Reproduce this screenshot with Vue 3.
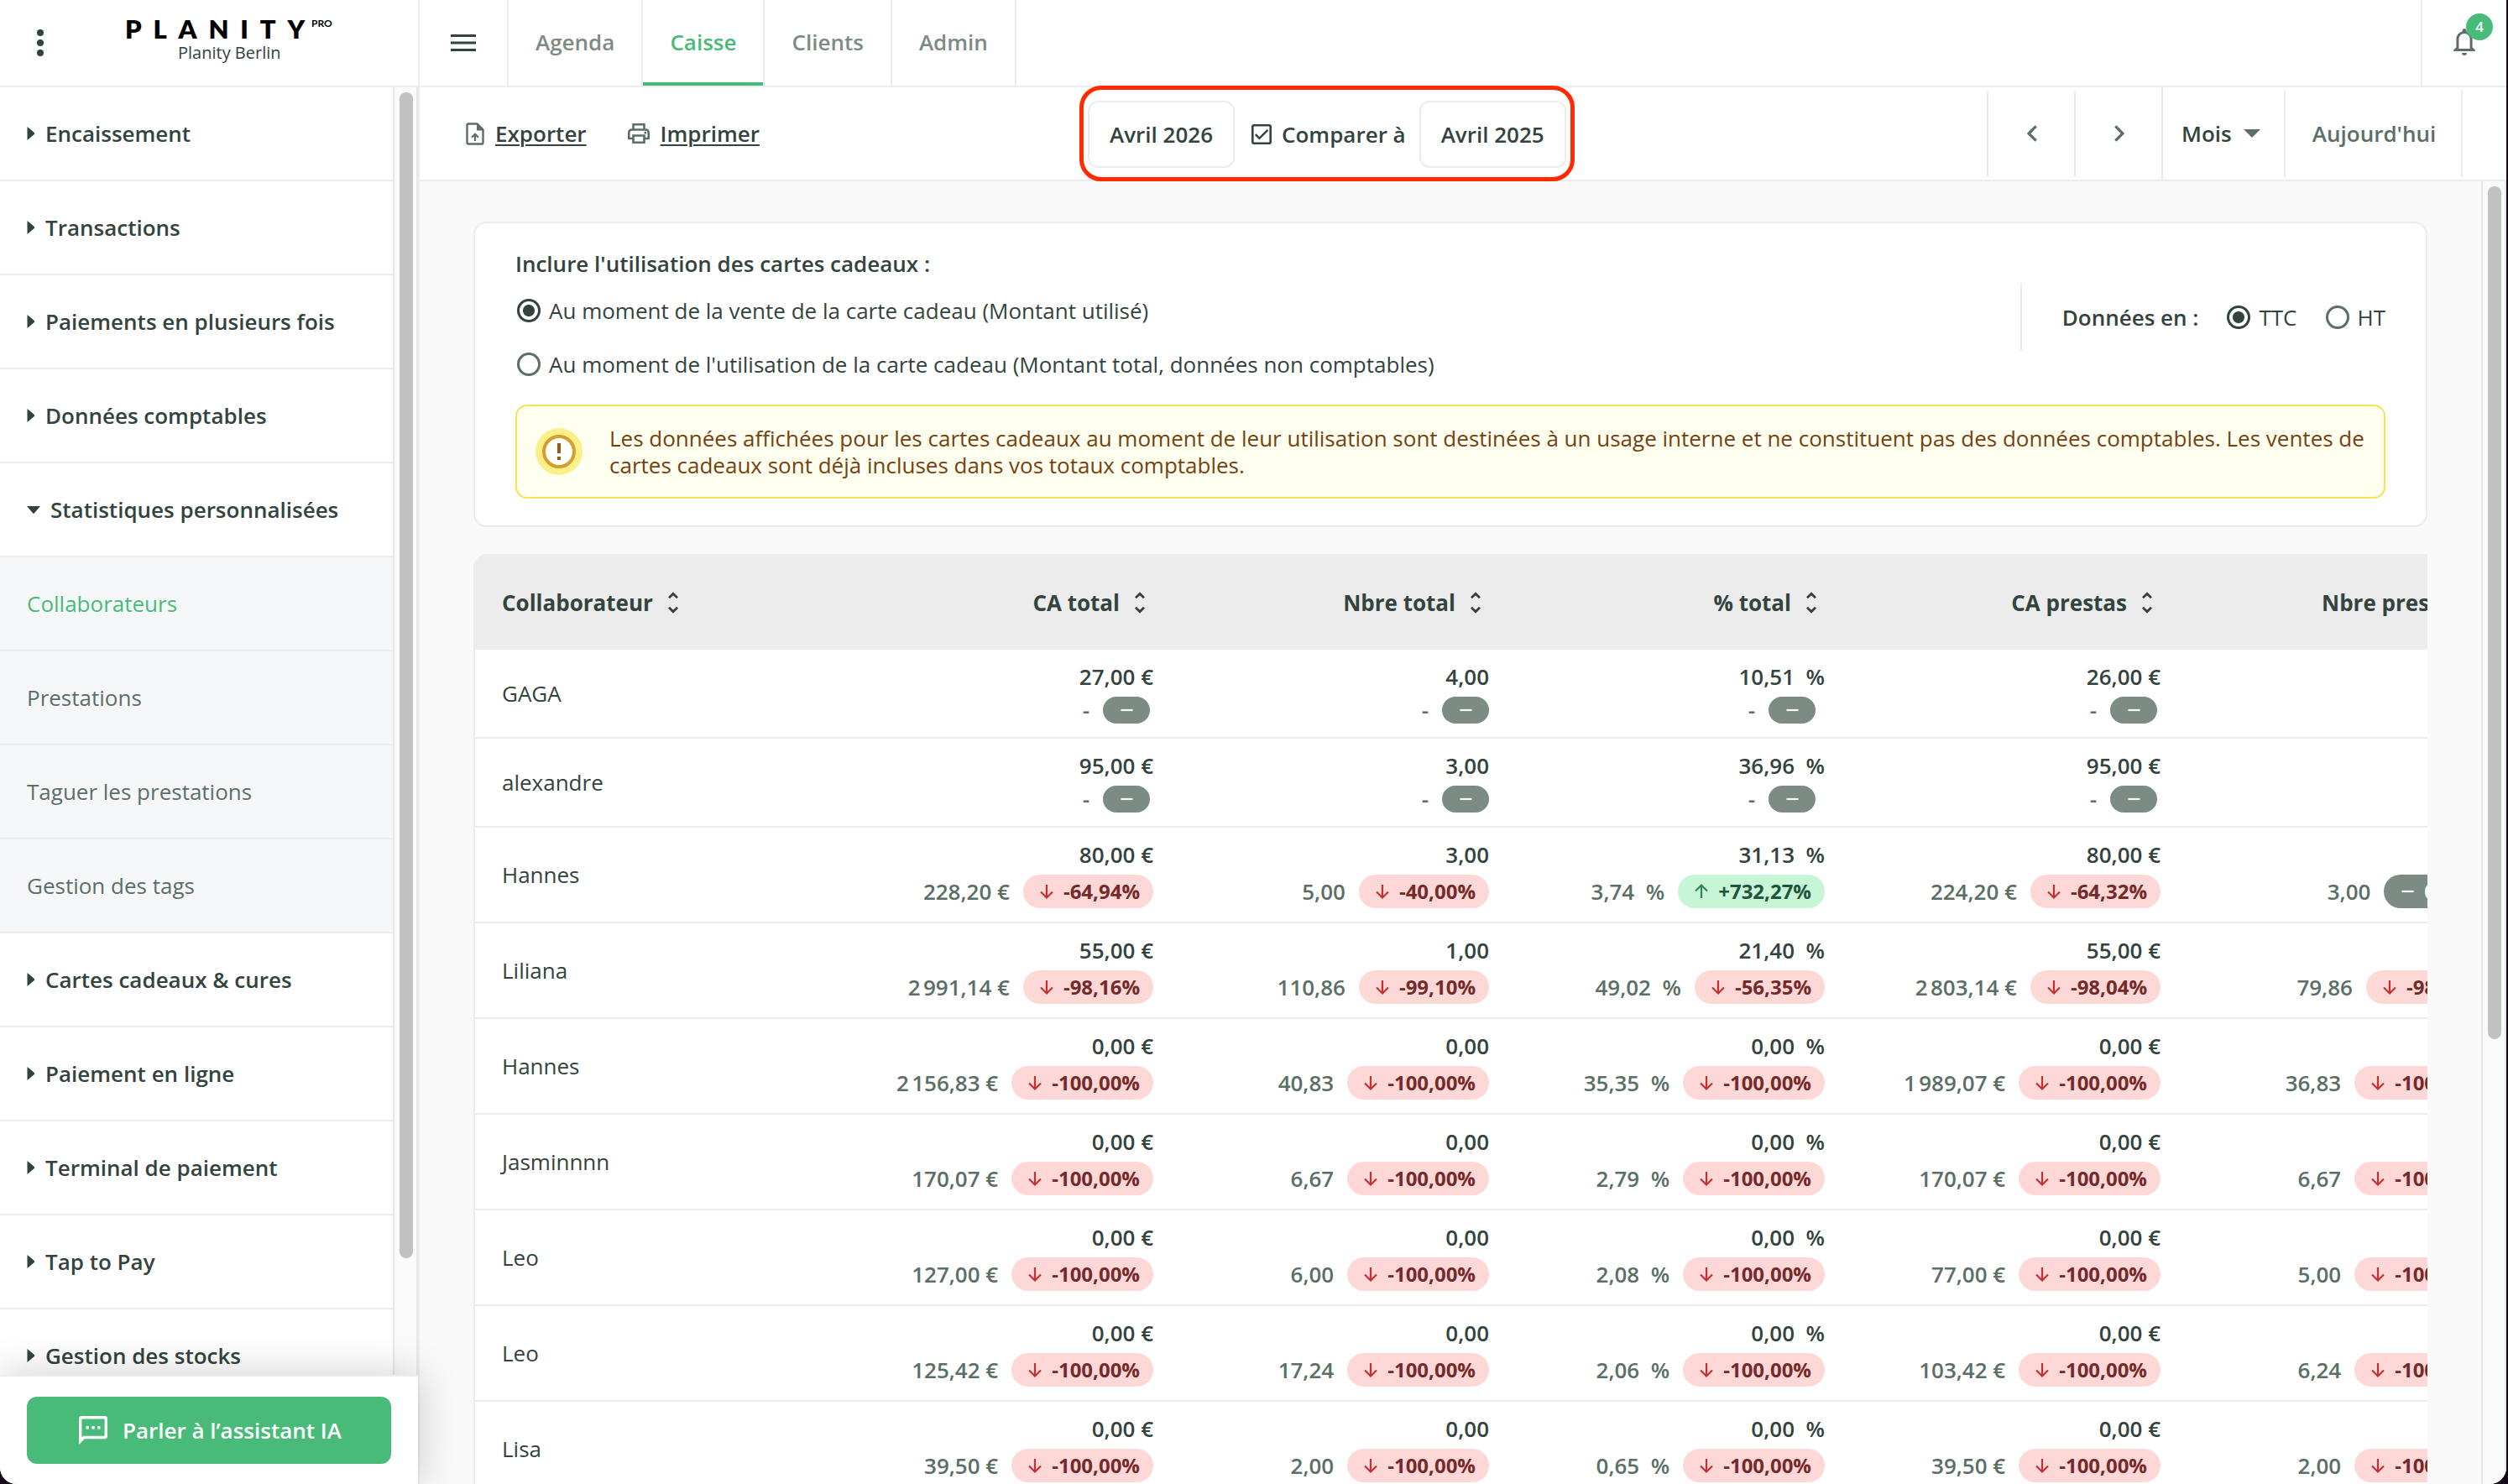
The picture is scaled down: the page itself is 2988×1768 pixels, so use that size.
<template>
  <div class="screen">
    <header class="topbar">
      <div class="brand">
        <svg class="kebab" viewBox="0 0 8 32">
          <circle cx="4" cy="4" r="4" />
          <circle cx="4" cy="16" r="4" />
          <circle cx="4" cy="28" r="4" />
        </svg>
        <div class="brand-text">
          <div class="logo">PLANITY<sup>PRO</sup></div>
          <div class="salon">Planity Berlin</div>
        </div>
      </div>
      <button class="burger">
        <svg viewBox="0 0 30 20">
          <path d="M0 0h30v3H0zM0 8.5h30v3H0zM0 17h30v3H0z" />
        </svg>
      </button>
      <nav class="tabs">
        <a v-for="tab in tabs" :key="tab" class="tab" :class="{ active: tab === 'Caisse' }">{{ tab }}</a>
      </nav>
      <div class="bell">
        <svg viewBox="0 0 26 32">
          <path d="M13 0c1.4 0 2.4 1 2.4 2.4v1C19.6 4.400 22.600 8 22.600 12.400V22.500L26 25.600V27H0v-1.400L3.400 22.500V12.400C3.400 8 6.400 4.400 10.600 3.400v-1C10.600 1 11.600 0 13 0zM13 6c-3.800 0-6.600 2.900-6.600 6.700V24h13.200V12.700C19.600 8.900 16.800 6 13 6zM10 29h6a3 3 0 0 1-6 0z" fill-rule="evenodd" />
        </svg>
        <span class="badge">4</span>
      </div>
    </header>

    <div class="body">
      <aside class="sidebar">
        <div class="menu-wrap">
          <ul class="menu">
            <li v-for="item in menu" :key="item.label" :class="{ sub: item.sub, current: item.current }">
              <svg v-if="item.open" class="arrow-down" viewBox="0 0 16 9"><path d="M0 0h16l-7 8.300q-1 1-2 0z" /></svg>
              <svg v-else-if="!item.sub" class="arrow-right" viewBox="0 0 9 16"><path d="M0 0v16l8.300-7q1-1 0-2z" /></svg>
              <span>{{ item.label }}</span>
            </li>
          </ul>
          <div class="track"><div class="thumb side-thumb"></div></div>
        </div>
        <div class="assistant">
          <button>
            <svg viewBox="0 0 34 34">
              <path d="M3.400 0h27.200Q34 0 34 3.400V23.800Q34 27.200 30.600 27.200H6.800L0 34V3.400Q0 0 3.400 0zM3.400 3.400V25.600L5.200 23.800H30.600V3.400zM8.500 12h3.400v3.400H8.500zM15.300 12h3.400v3.400h-3.400zM22.100 12h3.400v3.400h-3.400z" fill-rule="evenodd" />
            </svg>
            Parler à l’assistant IA
          </button>
        </div>
      </aside>

      <main class="main">
        <div class="toolbar">
          <div class="actions">
            <a class="action">
              <svg class="export" viewBox="0 0 22 27">
                <path d="M3 1.500h10.500l7 7V24q0 1.500-1.500 1.500H3Q1.500 25.500 1.500 24V3Q1.500 1.500 3 1.500z" fill="none" stroke="currentColor" stroke-width="2.400" />
                <path d="M13 1l8.500 8.500H13z" />
                <path d="M11 22v-7.500M7 17.800l4-4 4 4" fill="none" stroke="currentColor" stroke-width="2.200" />
              </svg>
              <span>Exporter</span>
            </a>
            <a class="action">
              <svg class="print" viewBox="0 0 26 24" fill="none" stroke="currentColor" stroke-width="2.600">
                <path d="M6.500 7V1.300h13V7M6.500 18H1.300V11q0-3.500 3.500-3.500h16.400q3.500 0 3.500 3.500v7h-5.200M6.500 14.500h13v8.200h-13z" />
                <path d="M19.500 11.200h2.600" />
              </svg>
              <span>Imprimer</span>
            </a>
          </div>
          <div class="period">
            <div class="date">Avril 2026</div>
            <label class="compare">
              <svg viewBox="0 0 24 24" fill="none" stroke="currentColor">
                <rect x="1.300" y="1.300" width="21.400" height="21.400" rx="1.800" stroke-width="2.600" />
                <path d="M4.800 12.200l4.600 4.600 10-10" stroke-width="2.500" />
              </svg>
              Comparer à
            </label>
            <div class="date">Avril 2025</div>
          </div>
          <div class="pager">
            <div class="step"><svg viewBox="0 0 12 20"><path d="M10.700 1.300L2 10l8.700 8.700" /></svg></div>
            <div class="step"><svg viewBox="0 0 12 20"><path d="M1.300 1.300L10 10l-8.700 8.700" /></svg></div>
            <div class="range">Mois <svg viewBox="0 0 20 10"><path d="M0 0h20L10 10z" /></svg></div>
            <div class="today">Aujourd'hui</div>
          </div>
        </div>

        <div class="scroll">
          <div class="content">
            <section class="card">
              <div class="card-top">
                <div class="gift">
                  <h2>Inclure l'utilisation des cartes cadeaux :</h2>
                  <label class="radio on"><i></i>Au moment de la vente de la carte cadeau (Montant utilisé)</label>
                  <label class="radio"><i></i>Au moment de l'utilisation de la carte cadeau (Montant total, données non comptables)</label>
                </div>
                <div class="tax">
                  <b>Données en :</b>
                  <label class="radio on"><i></i>TTC</label>
                  <label class="radio"><i></i>HT</label>
                </div>
              </div>
              <div class="alert">
                <svg viewBox="0 0 56 56">
                  <circle cx="28" cy="28" r="28" fill="#faf089" />
                  <circle cx="28" cy="28" r="18" fill="#fff" stroke="#d69e2e" stroke-width="4" />
                  <path d="M26 18h4v12h-4zM26 34h4v4h-4z" fill="#975a16" />
                </svg>
                <p>Les données affichées pour les cartes cadeaux au moment de leur utilisation sont destinées à un usage interne et ne constituent pas des données comptables. Les ventes de cartes cadeaux sont déjà incluses dans vos totaux comptables.</p>
              </div>
            </section>

            <section class="table">
              <div class="row head">
                <div v-for="(col, i) in columns" :key="col" class="cell" :class="{ name: i === 0 }">
                  {{ col }}
                  <svg class="sort" viewBox="0 0 32 32"><path d="M11 10.200l5-5 5 5M11 21.800l5 5 5-5" /></svg>
                </div>
              </div>
              <div v-for="(row, r) in rows" :key="r" class="row">
                <div class="cell name">{{ row.name }}</div>
                <div v-for="(c, i) in row.cells" :key="i" class="cell" :class="units[i]">
                  <div class="now">{{ withUnit(c[0], i) }}</div>
                  <div class="before">
                    <span>{{ c[1] ? withUnit(c[1], i) : '-' }}</span>
                    <div class="pill" :class="[tone(c[2]), { empty: !c[2] }]">
                      <svg viewBox="0 0 24 24"><path :d="glyphs[tone(c[2])]" /></svg>
                      <template v-if="c[2]">{{ c[2] }}</template>
                    </div>
                  </div>
                </div>
              </div>
            </section>
          </div>
          <div class="track"><div class="thumb main-thumb"></div></div>
        </div>
      </main>
    </div>
  </div>
</template>

<script setup>
const tabs = ['Agenda', 'Caisse', 'Clients', 'Admin']

const menu = [
  { label: 'Encaissement' },
  { label: 'Transactions' },
  { label: 'Paiements en plusieurs fois' },
  { label: 'Données comptables' },
  { label: 'Statistiques personnalisées', open: true },
  { label: 'Collaborateurs', sub: true, current: true },
  { label: 'Prestations', sub: true },
  { label: 'Taguer les prestations', sub: true },
  { label: 'Gestion des tags', sub: true },
  { label: 'Cartes cadeaux & cures' },
  { label: 'Paiement en ligne' },
  { label: 'Terminal de paiement' },
  { label: 'Tap to Pay' },
  { label: 'Gestion des stocks' }
]

const columns = ['Collaborateur', 'CA total', 'Nbre total', '% total', 'CA prestas', 'Nbre prestas']
const units = ['eur', 'nb', 'pct', 'eur', 'nb']

// [valeur, valeur comparée, évolution]
const rows = [
  { name: 'GAGA', cells: [['27,00'], ['4,00'], ['10,51'], ['26,00']] },
  { name: 'alexandre', cells: [['95,00'], ['3,00'], ['36,96'], ['95,00']] },
  { name: 'Hannes', cells: [['80,00', '228,20', '-64,94%'], ['3,00', '5,00', '-40,00%'], ['31,13', '3,74', '+732,27%'], ['80,00', '224,20', '-64,32%'], ['', '3,00', '0,00%']] },
  { name: 'Liliana', cells: [['55,00', '2\u202f991,14', '-98,16%'], ['1,00', '110,86', '-99,10%'], ['21,40', '49,02', '-56,35%'], ['55,00', '2\u202f803,14', '-98,04%'], ['', '79,86', '-98,75%']] },
  lost('Hannes', '2\u202f156,83', '40,83', '35,35', '1\u202f989,07', '36,83'),
  lost('Jasminnnn', '170,07', '6,67', '2,79', '170,07', '6,67'),
  lost('Leo', '127,00', '6,00', '2,08', '77,00', '5,00'),
  lost('Leo', '125,42', '17,24', '2,06', '103,42', '6,24'),
  lost('Lisa', '39,50', '2,00', '0,65', '39,50', '2,00')
]

const glyphs = {
  down: 'M12 4v15M5 12.500l7 7 7-7',
  up: 'M12 20V5M5 11.500l7-7 7 7',
  flat: 'M5.500 12h14'
}

function lost (name, ...values) {
  return { name, cells: values.map((v, i) => [i < 4 ? '0,00' : '', v, '-100,00%']) }
}

function withUnit (value, i) {
  if (units[i] === 'eur') return value + '\u00a0€'
  if (units[i] === 'pct') return value + '\u00a0\u00a0%'
  return value
}

function tone (change) {
  if (!change || change === '0,00%') return 'flat'
  return change[0] === '-' ? 'down' : 'up'
}
</script>

<style>
body {
  background: #150a1c;
}
</style>

<style scoped>
* {
  box-sizing: border-box;
}

.screen {
  width: 2986px;
  height: 1768px;
  overflow: hidden;
  background: #fff;
  border-radius: 0 0 20px 20px;
  font-family: "Open Sans", "Noto Sans", sans-serif;
  font-size: 26px;
  line-height: 32px;
  color: #33433d;
  display: flex;
  flex-direction: column;
}

svg {
  display: block;
  flex: none;
  fill: currentColor;
}

button {
  border: 0;
  padding: 0;
  background: none;
  font: inherit;
  color: inherit;
}

.topbar {
  height: 104px;
  flex: none;
  display: flex;
  border-bottom: 2px solid #ececec;
}

.brand {
  width: 500px;
  display: flex;
  padding-left: 44px;
  border-right: 2px solid #ececec;
}

.kebab {
  width: 8px;
  height: 32px;
  margin-top: 35px;
}

.brand-text {
  padding-left: 97px;
  padding-top: 18px;
}

.logo {
  font-family: Lato, sans-serif;
  font-weight: 800;
  font-size: 31px;
  line-height: 32px;
  letter-spacing: 13.800px;
  color: #000;
  white-space: nowrap;
}

.logo sup {
  display: inline-block;
  vertical-align: 14px;
  font-size: 12px;
  font-weight: 700;
  line-height: 12px;
  letter-spacing: 0;
  margin-left: -6px;
}

.salon {
  font-size: 20px;
  line-height: 26px;
  padding-left: 63px;
}

.burger {
  width: 106px;
  border-right: 2px solid #ececec;
  display: flex;
  align-items: center;
  justify-content: center;
}

.burger svg {
  width: 30px;
  height: 20px;
}

.tabs {
  display: flex;
  flex: 1;
}

.tab {
  padding: 0 32px;
  line-height: 101px;
  font-weight: 600;
  color: #7d8b85;
  border-right: 2px solid #ececec;
}

.tab.active {
  color: #48bb78;
  box-shadow: inset 0 -4px #48bb78;
}

.bell {
  position: relative;
  width: 102px;
  border-left: 2px solid #ececec;
  padding: 34px 0 0 37px;
  color: #5b6f67;
}

.bell svg {
  width: 26px;
  height: 32px;
}

.badge {
  position: absolute;
  top: 16px;
  left: 52px;
  width: 32px;
  height: 32px;
  border-radius: 50%;
  background: #48bb78;
  color: #fff;
  font-size: 17px;
  font-weight: 600;
  text-align: center;
}

.body {
  flex: 1;
  min-height: 0;
  display: flex;
}

.sidebar {
  width: 500px;
  flex: none;
  display: flex;
  flex-direction: column;
  border-right: 2px solid #ececec;
  z-index: 1;
}

.menu-wrap {
  flex: 1;
  min-height: 0;
  overflow: hidden;
  display: flex;
}

.menu {
  flex: 1;
  margin: 0;
  padding: 0;
  list-style: none;
}

.menu li {
  height: 112px;
  display: flex;
  align-items: center;
  gap: 12px;
  padding-left: 32px;
  border-bottom: 2px solid #ececec;
  font-weight: 600;
}

.menu li.sub {
  background: #f6f7f9;
  font-weight: 400;
  color: #5b6f67;
}

.menu li.current {
  color: #48bb78;
}

.arrow-right {
  width: 10px;
  height: 16px;
}

.arrow-down {
  width: 16px;
  height: 9px;
}

.track {
  width: 30px;
  flex: none;
  background: #fafafa;
  border: solid #e8e8e8;
  border-width: 0 2px;
  padding: 6px;
}

.thumb {
  width: 16px;
  border-radius: 8px;
  background: #c1c1c1;
}

.side-thumb {
  height: 1389px;
}

.main-thumb {
  height: 1016px;
}

.assistant {
  height: 130px;
  flex: none;
  padding: 24px 32px;
  background: #fff;
  border-top: 2px solid #ececec;
  box-shadow: 0 0 50px rgba(0, 0, 0, 0.2);
}

.assistant button {
  width: 434px;
  height: 80px;
  padding-left: 3px;
  border-radius: 12px;
  background: #48bb78;
  color: #fff;
  font-weight: 600;
  display: flex;
  align-items: center;
  justify-content: center;
  gap: 18px;
}

.assistant svg {
  width: 34px;
  height: 34px;
}

.main {
  flex: 1;
  min-width: 0;
  display: flex;
  flex-direction: column;
}

.toolbar {
  height: 112px;
  flex: none;
  display: flex;
  align-items: center;
  border-bottom: 2px solid #ececec;
}

.actions {
  width: 786px;
  padding-left: 55px;
  display: flex;
  gap: 49px;
}

.action {
  display: flex;
  align-items: center;
  gap: 13px;
  font-weight: 600;
}

.action span {
  text-decoration: underline;
  text-decoration-thickness: 2px;
  text-underline-offset: 3px;
}

.action svg {
  color: #5b6f67;
}

.export {
  width: 22px;
  height: 27px;
}

.print {
  width: 26px;
  height: 24px;
}

.print,
.compare svg {
  fill: none;
}

.period {
  flex: none;
  height: 114px;
  margin: -2px 0;
  padding: 1px 5px 0;
  border: 5px solid #ff2a00;
  border-radius: 26px;
  display: flex;
  align-items: center;
  font-weight: 600;
}

.date {
  height: 80px;
  width: 175px;
  border: 2px solid #ececec;
  border-radius: 12px;
  display: flex;
  align-items: center;
  justify-content: center;
}

.compare {
  display: flex;
  align-items: center;
  gap: 12px;
  padding: 0 16px 0 20px;
}

.compare svg {
  width: 24px;
  height: 24px;
}

.pager {
  margin-left: auto;
  margin-right: 52px;
  height: 104px;
  display: flex;
  align-items: center;
  color: #5b6f67;
}

.pager > div {
  height: 104px;
  display: flex;
  align-items: center;
}

.step {
  width: 104px;
  padding-left: 2px;
  justify-content: center;
  border-left: 2px solid #ececec;
}

.step svg {
  width: 12px;
  height: 20px;
  fill: none;
  stroke: currentColor;
  stroke-width: 3.2;
}

.pager .range {
  height: 110px;
  width: 146px;
  border-left: 2px solid #ececec;
  padding-left: 22px;
  gap: 14px;
  font-weight: 600;
  color: #33433d;
}

.range svg {
  width: 20px;
  height: 10px;
  color: #5b6f67;
}

.today {
  width: 213px;
  padding-left: 2px;
  justify-content: center;
  border: solid #ececec;
  border-width: 0 2px;
  font-weight: 600;
}

.scroll {
  flex: 1;
  min-height: 0;
  display: flex;
  overflow: hidden;
}

.content {
  width: 2456px;
  padding: 48px 64px 0;
  background: #f9f9f9;
}

.card {
  height: 364px;
  border: 2px solid #ececec;
  border-radius: 16px;
  background: #fff;
  padding: 31px 48px 0;
}

.card-top {
  display: flex;
  justify-content: space-between;
}

h2 {
  margin: 0 0 23px;
  font-size: 26px;
  line-height: 34px;
  font-weight: 600;
}

.radio {
  display: flex;
  align-items: center;
  height: 32px;
  gap: 10px;
}

.gift .radio {
  padding-left: 2px;
  margin-bottom: 32px;
}

.radio i {
  width: 28px;
  height: 28px;
  border: 3px solid #5b6f67;
  border-radius: 50%;
}

.radio.on i {
  border-color: #33433d;
  background: radial-gradient(circle, #33433d 6.5px, transparent 7.5px);
}

.tax {
  margin-top: 41px;
  height: 80px;
  border-left: 2px solid #ececec;
  padding-left: 48px;
  display: flex;
  align-items: center;
}

.tax b {
  font-weight: 600;
  margin-right: 34px;
}

.tax .radio + .radio {
  margin-left: 34px;
}

.alert {
  height: 112px;
  border: 2px solid #f6e05e;
  border-radius: 14px;
  background: #fffff0;
  display: flex;
  align-items: center;
  gap: 32px;
  padding: 0 22px;
  color: #744210;
}

.alert svg {
  width: 56px;
  height: 56px;
}

.alert p {
  margin: 0;
}

.table {
  margin-top: 32px;
  overflow: hidden;
  border-left: 2px solid #ececec;
  border-radius: 16px 0 0 0;
  background: #fff;
}

.row {
  width: 2440px;
  display: grid;
  grid-template-columns: 440px repeat(5, 400px);
  align-items: center;
  border-bottom: 2px solid #ececec;
  padding: 16px 0;
}

.head {
  height: 114px;
  padding-top: 19px;
  background: #ececec;
  font-weight: 700;
}

.cell {
  padding: 0 32px;
  white-space: nowrap;
}

.head .cell {
  display: flex;
  justify-content: flex-end;
  align-items: center;
  gap: 8px;
}

.head .name {
  justify-content: flex-start;
}

.sort {
  width: 32px;
  height: 32px;
  fill: none;
  stroke: currentColor;
  stroke-width: 2.8;
}

.now {
  min-height: 32px;
  text-align: right;
  font-weight: 600;
}

.before {
  margin-top: 8px;
  display: flex;
  justify-content: flex-end;
  align-items: center;
  gap: 16px;
  font-weight: 600;
  color: #5b6f67;
}

.pill {
  height: 40px;
  padding: 0 16px;
  border-radius: 20px;
  display: flex;
  align-items: center;
  gap: 8px;
  font-size: 24px;
  font-weight: 700;
}

.pill svg {
  width: 24px;
  height: 24px;
  fill: none;
  stroke: currentColor;
  stroke-width: 2.2;
}

.pill.down {
  background: #fed7d7;
  color: #742a2a;
}

.pill.down svg {
  color: #c53030;
}

.pill.up {
  background: #c6f6d5;
  color: #22543d;
}

.pill.up svg {
  color: #2f855a;
}

.pill.flat {
  background: #7d8b85;
  color: #fff;
}

.pill.empty {
  height: 32px;
}

.eur .empty {
  margin-right: 4px;
}

.pct .empty {
  margin-right: 11px;
}
</style>
